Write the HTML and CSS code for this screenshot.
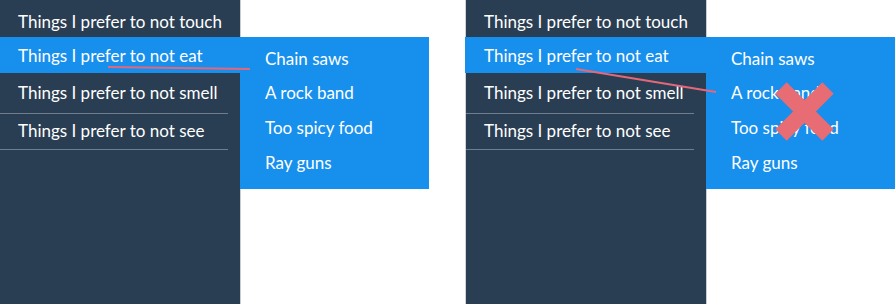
FILE: index.html
```html
<!DOCTYPE html>
<html lang="en">
<head>
<meta charset="utf-8">
<title>Menu aim</title>
<link rel="stylesheet" href="styles.css">
</head>
<body>
<div class="stage">
  <section class="frame">
    <nav class="sidebar">
      <ul class="menu">
        <li class="item item--touch">Things I prefer to not touch</li>
        <li class="item item--active">Things I prefer to not eat</li>
        <li class="item item--smell">Things I prefer to not smell</li>
        <li class="item item--see">Things I prefer to not see</li>
      </ul>
    </nav>
    <ul class="submenu">
      <li class="subitem">Chain saws</li>
      <li class="subitem">A rock band</li>
      <li class="subitem">Too spicy food</li>
      <li class="subitem">Ray guns</li>
    </ul>
    <svg class="overlay" width="466" height="304" viewBox="0 0 466 304">
      <line x1="108" y1="67" x2="250" y2="69" class="path-line"/>
    </svg>
  </section>
  <section class="frame frame--alt">
    <nav class="sidebar">
      <ul class="menu">
        <li class="item item--touch">Things I prefer to not touch</li>
        <li class="item item--active">Things I prefer to not eat</li>
        <li class="item item--smell">Things I prefer to not smell</li>
        <li class="item item--see">Things I prefer to not see</li>
      </ul>
    </nav>
    <ul class="submenu">
      <li class="subitem">Chain saws</li>
      <li class="subitem">A rock band</li>
      <li class="subitem">Too spicy food</li>
      <li class="subitem">Ray guns</li>
    </ul>
    <svg class="overlay" width="429" height="304" viewBox="0 0 429 304">
      <line x1="110" y1="69" x2="250" y2="92" class="path-line"/>
      <g class="cross">
        <line x1="315" y1="88" x2="362" y2="135"/>
        <line x1="362" y1="88" x2="315" y2="135"/>
      </g>
    </svg>
  </section>
</div>
</body>
</html>
```
FILE: styles.css
```css
* { box-sizing: border-box; }

html, body {
  margin: 0;
  padding: 0;
  background: #ffffff;
}

body {
  font-family: Lato, "Open Sans", sans-serif;
  font-size: 17px;
  color: #ffffff;
}

ul {
  list-style: none;
  margin: 0;
  padding: 0;
}

.stage {
  display: flex;
  width: 895px;
  height: 304px;
}

.frame {
  position: relative;
  width: 465px;
  height: 304px;
}

.frame--alt {
  width: 430px;
  border-left: 1px solid #d0d3d6;
}

.sidebar {
  width: 241px;
  height: 304px;
  background: #293e53;
  border-right: 1px solid #c9cdd1;
}

.item {
  line-height: 20px;
  padding-left: 18px;
  white-space: nowrap;
}

.item--touch {
  padding-top: 12px;
  padding-bottom: 5px;
}

.item--active {
  background: #178fed;
  padding-top: 9px;
  padding-bottom: 7px;
  margin-right: -1px;
}

.frame--alt .item--active {
  margin-left: -1px;
  padding-left: 19px;
}

.item--smell {
  padding-top: 10px;
  padding-bottom: 10px;
  margin-right: 12px;
  border-bottom: 1px solid #6e7e8e;
}

.item--see {
  padding-top: 7px;
  padding-bottom: 8px;
  margin-right: 12px;
  border-bottom: 1px solid #6e7e8e;
}

.submenu {
  position: absolute;
  left: 240px;
  top: 37px;
  width: 189px;
  height: 152px;
  background: #178fed;
  padding: 12px 0 4px 25px;
}

.subitem {
  height: 34px;
  line-height: 20px;
  white-space: nowrap;
}

.subitem:nth-child(n+3) {
  position: relative;
  top: 1px;
}

.subitem:nth-child(4) {
  top: 2px;
}

.overlay {
  position: absolute;
  left: 0;
  top: 0;
  pointer-events: none;
}

.path-line {
  stroke: #e4687a;
  stroke-width: 2;
}

.cross line {
  stroke: #e86c74;
  stroke-width: 16;
  stroke-linecap: butt;
}
```
